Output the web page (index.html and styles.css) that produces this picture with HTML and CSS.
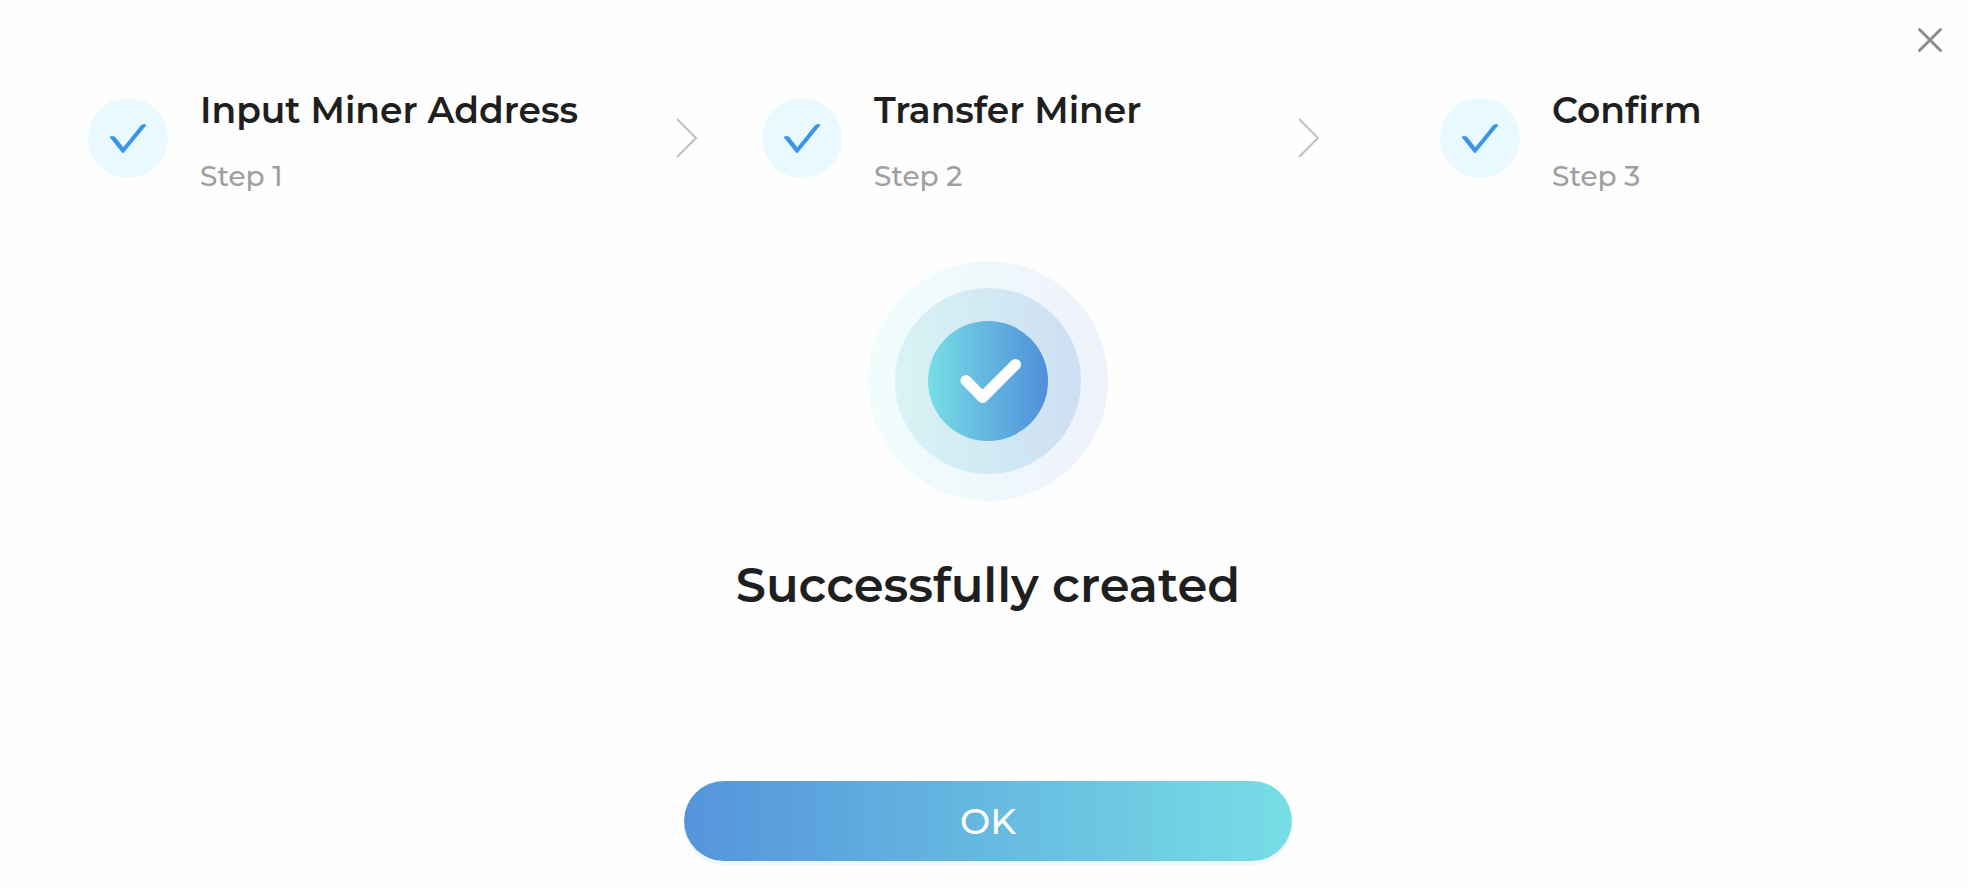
FILE: index.html
```
<!DOCTYPE html>
<html lang="en">

<head>
  <meta charset="utf-8">
  <meta name="viewport" content="width=device-width, initial-scale=1.0">
  <title>Transfer Miner</title>
  <link rel="stylesheet" href="styles.css">
</head>

<body>
  <div class="dialog">
    <button class="close" type="button" aria-label="Close">
      <svg viewBox="0 0 26 26" width="26" height="26">
        <path d="M2.5 2.5L23.5 23.5M23.5 2.5L2.5 23.5" />
      </svg>
    </button>

    <ol class="steps">
      <li class="step">
        <svg class="step-icon" viewBox="0 0 80 80">
          <circle cx="40" cy="40" r="40" />
          <path d="M21.5 39L23 38.3H26L27.3 39L35.3 49.3L53 27.2L54.8 26.3H57.5L58.5 27L36 54.5L35 55.2L34 54.5Z" />
        </svg>
        <div class="step-text">
          <h2>Input Miner Address</h2>
          <p>Step 1</p>
        </div>
      </li>
      <li class="arrow" aria-hidden="true">
        <svg viewBox="0 0 24 40" width="24" height="40">
          <path d="M1 1L20 20L1 39" />
        </svg>
      </li>
      <li class="step">
        <svg class="step-icon" viewBox="0 0 80 80">
          <circle cx="40" cy="40" r="40" />
          <path d="M21.5 39L23 38.3H26L27.3 39L35.3 49.3L53 27.2L54.8 26.3H57.5L58.5 27L36 54.5L35 55.2L34 54.5Z" />
        </svg>
        <div class="step-text">
          <h2>Transfer Miner</h2>
          <p>Step 2</p>
        </div>
      </li>
      <li class="arrow" aria-hidden="true">
        <svg viewBox="0 0 24 40" width="24" height="40">
          <path d="M1 1L20 20L1 39" />
        </svg>
      </li>
      <li class="step">
        <svg class="step-icon" viewBox="0 0 80 80">
          <circle cx="40" cy="40" r="40" />
          <path d="M21.5 39L23 38.3H26L27.3 39L35.3 49.3L53 27.2L54.8 26.3H57.5L58.5 27L36 54.5L35 55.2L34 54.5Z" />
        </svg>
        <div class="step-text">
          <h2>Confirm</h2>
          <p>Step 3</p>
        </div>
      </li>
    </ol>

    <div class="result">
      <svg class="result-icon" viewBox="0 0 240 240">
        <defs>
          <linearGradient id="outer">
            <stop offset="0" stop-color="#f1fdfc" />
            <stop offset="1" stop-color="#eef2fb" />
          </linearGradient>
          <linearGradient id="middle">
            <stop offset="0" stop-color="#d8f3f5" />
            <stop offset="1" stop-color="#cddff3" />
          </linearGradient>
          <linearGradient id="inner">
            <stop offset="0" stop-color="#77dee5" />
            <stop offset="1" stop-color="#508edb" />
          </linearGradient>
        </defs>
        <circle cx="120" cy="120" r="120" fill="url(#outer)" />
        <circle cx="120" cy="120" r="93" fill="url(#middle)" />
        <circle cx="120" cy="120" r="60" fill="url(#inner)" />
        <path class="tick" d="M98 119.5L114.5 136.5L147.5 103.5" />
      </svg>
      <h1>Successfully created</h1>
      <button class="ok" type="button">OK</button>
    </div>
  </div>
</body>

</html>
```

FILE: styles.css
```
* {
  box-sizing: border-box;
}

body {
  margin: 0;
  background-color: #fefefe;
  color: #1f1f1f;
  font-family: Montserrat, Inter, sans-serif;
}

h1, h2, p {
  margin: 0;
}

.dialog {
  position: relative;
  padding: 86px 80px 24px 88px;
}

.close {
  position: absolute;
  top: 20px;
  right: 18px;
  display: flex;
  padding: 7px;
  border: 0;
  background: none;
  cursor: pointer;
}

.close path {
  fill: none;
  stroke: #8c8c8c;
  stroke-width: 3;
  stroke-linecap: round;
}

.steps {
  display: grid;
  grid-template-columns: 588fr 86fr 536fr 142fr 448fr;
  align-items: center;
  margin: 0;
  padding: 0;
  list-style: none;
}

.step {
  display: flex;
  align-items: center;
  gap: 32px;
}

.step-icon {
  flex: none;
  width: 80px;
  height: 80px;
}

.step-icon circle {
  fill: #e8faff;
}

.step-icon path {
  fill: #3c94e8;
}

.step-text {
  white-space: nowrap;
}

.step h2 {
  margin-bottom: 28px;
  font-size: 36px;
  font-weight: 600;
  line-height: 48px;
}

.step p {
  color: #9f9f9f;
  font-size: 28px;
  font-weight: 500;
  line-height: 28px;
}

.arrow {
  display: flex;
}

.arrow path {
  fill: none;
  stroke: #bfbfbf;
  stroke-width: 2;
}

.result {
  display: flex;
  flex-direction: column;
  align-items: center;
  padding-top: 71px;
}

.result-icon {
  width: 240px;
  height: 240px;
}

.tick {
  fill: none;
  stroke: #fff;
  stroke-width: 11;
  stroke-linecap: round;
  stroke-linejoin: round;
}

.result h1 {
  margin: 52px 0 164px;
  font-size: 48px;
  font-weight: 600;
  line-height: 64px;
  text-align: center;
}

.ok {
  width: 608px;
  max-width: 100%;
  height: 80px;
  border: 0;
  border-radius: 40px;
  background: linear-gradient(90deg, #5594dc, #77dee5);
  box-shadow: 0 4px 0 #edf8ff;
  color: #fff;
  font-family: inherit;
  font-size: 36px;
  font-weight: 500;
  cursor: pointer;
}
```
